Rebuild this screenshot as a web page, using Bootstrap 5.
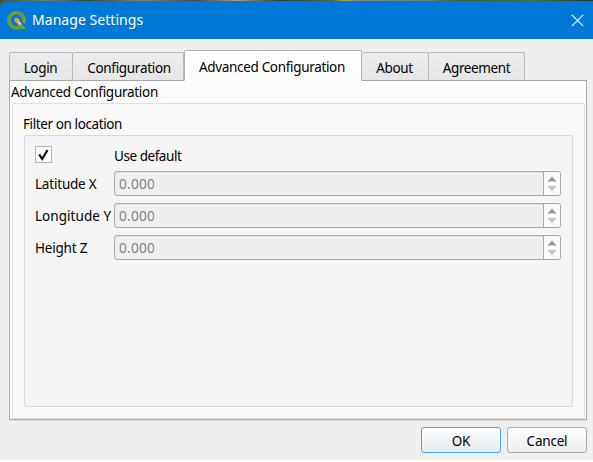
<!DOCTYPE html>
<html lang="en">
<head>
<meta charset="utf-8">
<meta name="viewport" content="width=device-width, initial-scale=1">
<title>Manage Settings</title>
<link href="https://cdn.jsdelivr.net/npm/bootstrap@5.3.0/dist/css/bootstrap.min.css" rel="stylesheet">
<style>
html, body { height: 462px; overflow: hidden; }
body { font-family: "Noto Sans", "Open Sans", sans-serif; font-size: 13.5px; line-height: 20px; color: #000; background: #fff; letter-spacing: -.33px; }
.backdrop { padding-top: 1px; background: linear-gradient(90deg, #3c5a3a 0, #7b7b6c 8%, #3b4434 15%, #8d7c68 24%, #4b4540 33%, #b59878 40%, #33412f 47%, #56604a 56%, #a9ac2c 58%, #85857c 60%, #777c70 72%, #3f5a2e 78%, #4d6b34 90%, #26382c 100%); }
.titlebar { height: 38px; background: #0078d7; color: #fff; border-top-left-radius: 7px; padding: 0 9px 0 6px; }
.titlebar .caption { font-size: 14px; margin-left: 5px; letter-spacing: .05px; }
.client { height: 421px; padding: 11px 6px 0 9px; background: #efefef; }
.nav-tabs.dialog-tabs { height: 30px; border: 0; align-items: flex-end; }
.dialog-tabs .nav-link { height: 29px; padding: 5px 1px 0 0; margin: 0; border: 1px solid #b9b9b9; border-left-width: 0; border-bottom-color: #a9a9a9; border-radius: 2px 2px 0 0; background: linear-gradient(#ebebeb, #e6e6e6); color: #000; text-align: center; white-space: nowrap; line-height: 20px; }
.dialog-tabs .nav-link.active { position: relative; height: 31px; background: linear-gradient(#fff, #fcfcfc); border-color: #b3b3b3; border-bottom-color: #fcfcfc; padding-top: 6px; padding-right: 2px; }
.tab-login { width: 64px; } .dialog-tabs .tab-login { border-left-width: 1px; }
.dialog-tabs .tab-conf { width: 111px; padding: 5px 0 0 2px; letter-spacing: -.3px; }
.dialog-tabs .tab-adv { width: 178px; border-left-width: 1px; }
.tab-about { width: 67px; } .dialog-tabs .tab-agree { width: 96px; padding-right: 0; letter-spacing: -.4px; }
.pane { height: 340px; width: 578px; border: 1px solid #a9a9a9; background: #fcfcfc; padding: 1px 1px 1px 2px; box-shadow: 0 1px #dcdcdc; }
.pane-title { height: 21px; margin-left: -1px; letter-spacing: -.28px; }
.outer { height: 316px; border: 1px solid #dedede; border-radius: 2px; background: #f9f9f9; padding: 10px 11px 0; }
.outer-title { height: 21px; margin-left: -1px; letter-spacing: -.4px; }
.inner { height: 272px; width: 549px; border: 1px solid #d9d9d9; border-radius: 2px; background: #f5f5f5; padding: 10px 11px 0 10px; }
.field-row { height: 25px; margin-bottom: 7px; }
.field-label { width: 79px; flex: none; white-space: nowrap; letter-spacing: -.2px; }
.field-label.wide { letter-spacing: .05px; }
.check-row { height: 18px; margin-bottom: 7px; }
.check-text { padding-top: 2px; letter-spacing: -.45px; }
.tick { width: 17px; height: 17px; border: 1px solid #b5b5b5; background: #fff; display: block; margin-bottom: 1px; }
.spin { height: 25px; width: 447px; border: 1px solid #a9a9a9; border-radius: 3px; background: #efefef; box-shadow: inset 0 1px #dfdfdf; color: #7f7f7f; padding-left: 4px; letter-spacing: .3px; }
.steps { width: 17px; border-left: 1px solid #a9a9a9; background: #fafafa; border-radius: 0 2px 2px 0; }
.steps svg { display: block; }
.actions { margin-top: 7px; gap: 6px; }
.actions .btn { width: 80px; height: 26px; padding: 2px 0 0; border: 1px solid #ababab; border-radius: 3px; font-size: 13.5px; line-height: 22px; color: #000; background: linear-gradient(#fff, #ededed); letter-spacing: -.2px; }
.actions .btn.is-default { border-color: #45a9f5; background: linear-gradient(#fdfefe, #e4eaee); }
</style>
</head>
<body>
<div class="backdrop">
  <header class="titlebar d-flex align-items-center">
    <svg width="21" height="21" viewBox="0 0 21 21" aria-hidden="true"><circle cx="10.500" cy="10.300" r="7.600" fill="none" stroke="#6a9d3a" stroke-width="3.800"/><path d="M13 12.500l6 6" stroke="#0078d7" stroke-width="5.500"/><path d="M12 10.500l8 8.500h-4.200L10 13z" fill="#7fa63c"/><path d="M8.500 8h3.500l2 2.500-2.500 2.500-3-1.500z" fill="#ee9450"/><path d="M12 11.500l3 3" stroke="#d9d6a0" stroke-width="2"/></svg>
    <span class="caption">Manage Settings</span>
    <svg class="ms-auto" width="13" height="13" viewBox="0 0 13 13" aria-label="Close"><path d="M.8.8l11.400 11.400M12.200.8L.8 12.200" stroke="#fff" stroke-width="1.100"/></svg>
  </header>
</div>
<main class="client">
  <nav class="nav nav-tabs dialog-tabs">
    <a class="nav-link tab-login">Login</a>
    <a class="nav-link tab-conf">Configuration</a>
    <a class="nav-link tab-adv active">Advanced Configuration</a>
    <a class="nav-link tab-about">About</a>
    <a class="nav-link tab-agree">Agreement</a>
  </nav>
  <section class="pane">
    <div class="pane-title">Advanced Configuration</div>
    <div class="outer">
      <div class="outer-title">Filter on location</div>
      <div class="inner">
        <div class="check-row d-flex align-items-center">
          <div class="field-label"><span class="tick"><svg class="d-block" width="15" height="15" viewBox="0 0 15 15"><path d="M3.200 7.300l3 4.700L11.500 3" fill="none" stroke="#111" stroke-width="2.200"/></svg></span></div>
          <span class="check-text">Use default</span>
        </div>
        <div class="field-row d-flex align-items-center"><span class="field-label">Latitude X</span><div class="spin d-flex align-items-center"><span>0.000</span><span class="steps ms-auto h-100"><svg width="16" height="23" viewBox="0 0 16 23"><path d="M3.500 9.500L8 4.500l4.500 5z" fill="#9b9b9b"/><path d="M3.500 14L8 19l4.500-5z" fill="#c5c5c5"/></svg></span></div></div>
        <div class="field-row d-flex align-items-center"><span class="field-label wide">Longitude Y</span><div class="spin d-flex align-items-center"><span>0.000</span><span class="steps ms-auto h-100"><svg width="16" height="23" viewBox="0 0 16 23"><path d="M3.500 9.500L8 4.500l4.500 5z" fill="#9b9b9b"/><path d="M3.500 14L8 19l4.500-5z" fill="#c5c5c5"/></svg></span></div></div>
        <div class="field-row d-flex align-items-center"><span class="field-label">Height Z</span><div class="spin d-flex align-items-center"><span>0.000</span><span class="steps ms-auto h-100"><svg width="16" height="23" viewBox="0 0 16 23"><path d="M3.500 9.500L8 4.500l4.500 5z" fill="#9b9b9b"/><path d="M3.500 14L8 19l4.500-5z" fill="#c5c5c5"/></svg></span></div></div>
      </div>
    </div>
  </section>
  <div class="actions d-flex justify-content-end">
    <button class="btn is-default" type="button">OK</button>
    <button class="btn" type="button">Cancel</button>
  </div>
</main>
<script src="https://cdn.jsdelivr.net/npm/bootstrap@5.3.0/dist/js/bootstrap.bundle.min.js"></script>
</body>
</html>
